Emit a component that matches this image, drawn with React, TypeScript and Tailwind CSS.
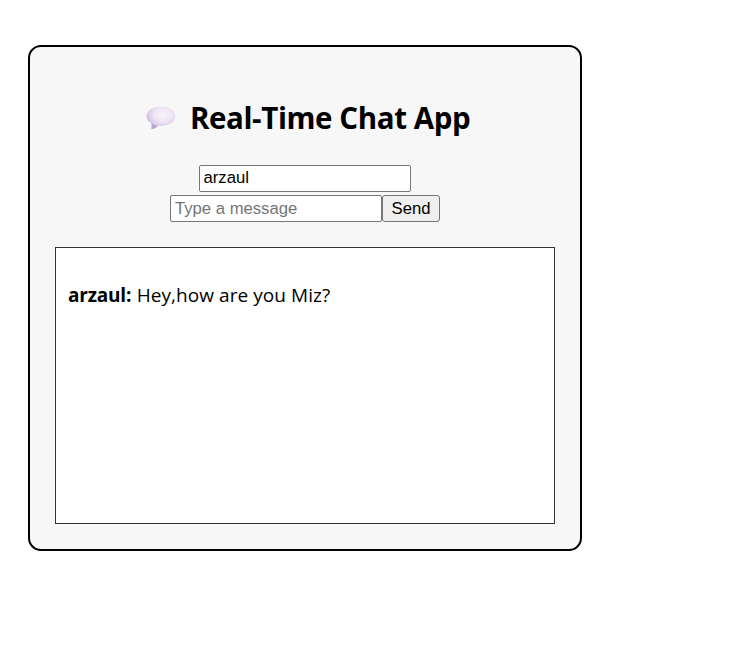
function SpeechBubble() {
  return (
    <svg width="30" height="24" viewBox="0 0 30 24" className="shrink-0" aria-hidden="true">
      <defs>
        <radialGradient id="bubble" cx="0.58" cy="0.36" r="0.62">
          <stop offset="0" stopColor="#f8f3fa" />
          <stop offset="0.5" stopColor="#eee6f4" />
          <stop offset="0.82" stopColor="#dccfe9" />
          <stop offset="1" stopColor="#bfaed8" />
        </radialGradient>
      </defs>
      <path
        d="M15 .5C7 .5 .7 4.500 .7 10.200c0 3.200 1.800 5.500 4.800 7.300.3 1.800.3 3.400 0 5 .2.500.7.600 1.200.400 2-.6 4.100-1.600 5.300-3.200 1 .1 2 .2 3 .2 8 0 14.200-4.100 14.200-9.700S23 .5 15 .5Z"
        fill="url(#bubble)"
      />
      <path
        d="M5.500 17.500c.3 1.800.3 3.400 0 5 .2.500.7.600 1.200.4 2-.6 4.100-1.600 5.300-3.200-2.500-.3-4.700-1-6.500-2.200Z"
        fill="#b8a5d3"
        fillOpacity="0.8"
      />
    </svg>
  );
}

export default function App() {
  return (
    <div className="h-[650px] overflow-hidden bg-white pt-[45px] pl-[28px] font-['Open_Sans','Noto_Sans',sans-serif] text-black">
      <main className="flex h-[506px] w-[554px] flex-col items-center rounded-[13px] border-2 border-black bg-[#f7f7f7] px-[25px]">
        <h1 className="mt-[51px] flex h-10 w-full items-center pl-[91px] text-[29.5px] leading-10 font-bold whitespace-nowrap">
          <SpeechBubble />
          <span className="ml-[14px] tracking-[-0.4px]">Real-Time Chat App</span>
        </h1>
        <input
          className="mt-[27px] h-[27px] w-[212px] shrink-0 rounded-[2px] border border-[#767676] bg-white px-[3.5px] pb-[1px] font-['Liberation_Sans',Arial,sans-serif] text-[16.667px] outline-none"
          defaultValue="arzaul"
        />
        <div className="mt-[3px] flex h-[27px] shrink-0">
          <input
            className="w-[212px] rounded-[2px] border border-[#767676] bg-white px-[4px] pt-[2px] font-['Liberation_Sans',Arial,sans-serif] text-[16.667px] outline-none placeholder:text-[#757575]"
            placeholder="Type a message"
          />
          <button className="w-[58px] rounded-[3px] border border-[#767676] bg-[#efefef] pt-[2px] font-['Liberation_Sans',Arial,sans-serif] text-[16.667px] leading-none">
            Send
          </button>
        </div>
        <section className="mt-[25px] h-[277px] w-[500px] shrink-0 border border-[#333] bg-white px-[12px] pt-[33px]">
          <p className="text-[19px] leading-7 whitespace-nowrap">
            <strong className="tracking-[-0.2px]">arzaul:</strong>
            <span className="ml-[5.500px] tracking-[0.07px]">Hey,how are you Miz?</span>
          </p>
        </section>
      </main>
    </div>
  );
}
